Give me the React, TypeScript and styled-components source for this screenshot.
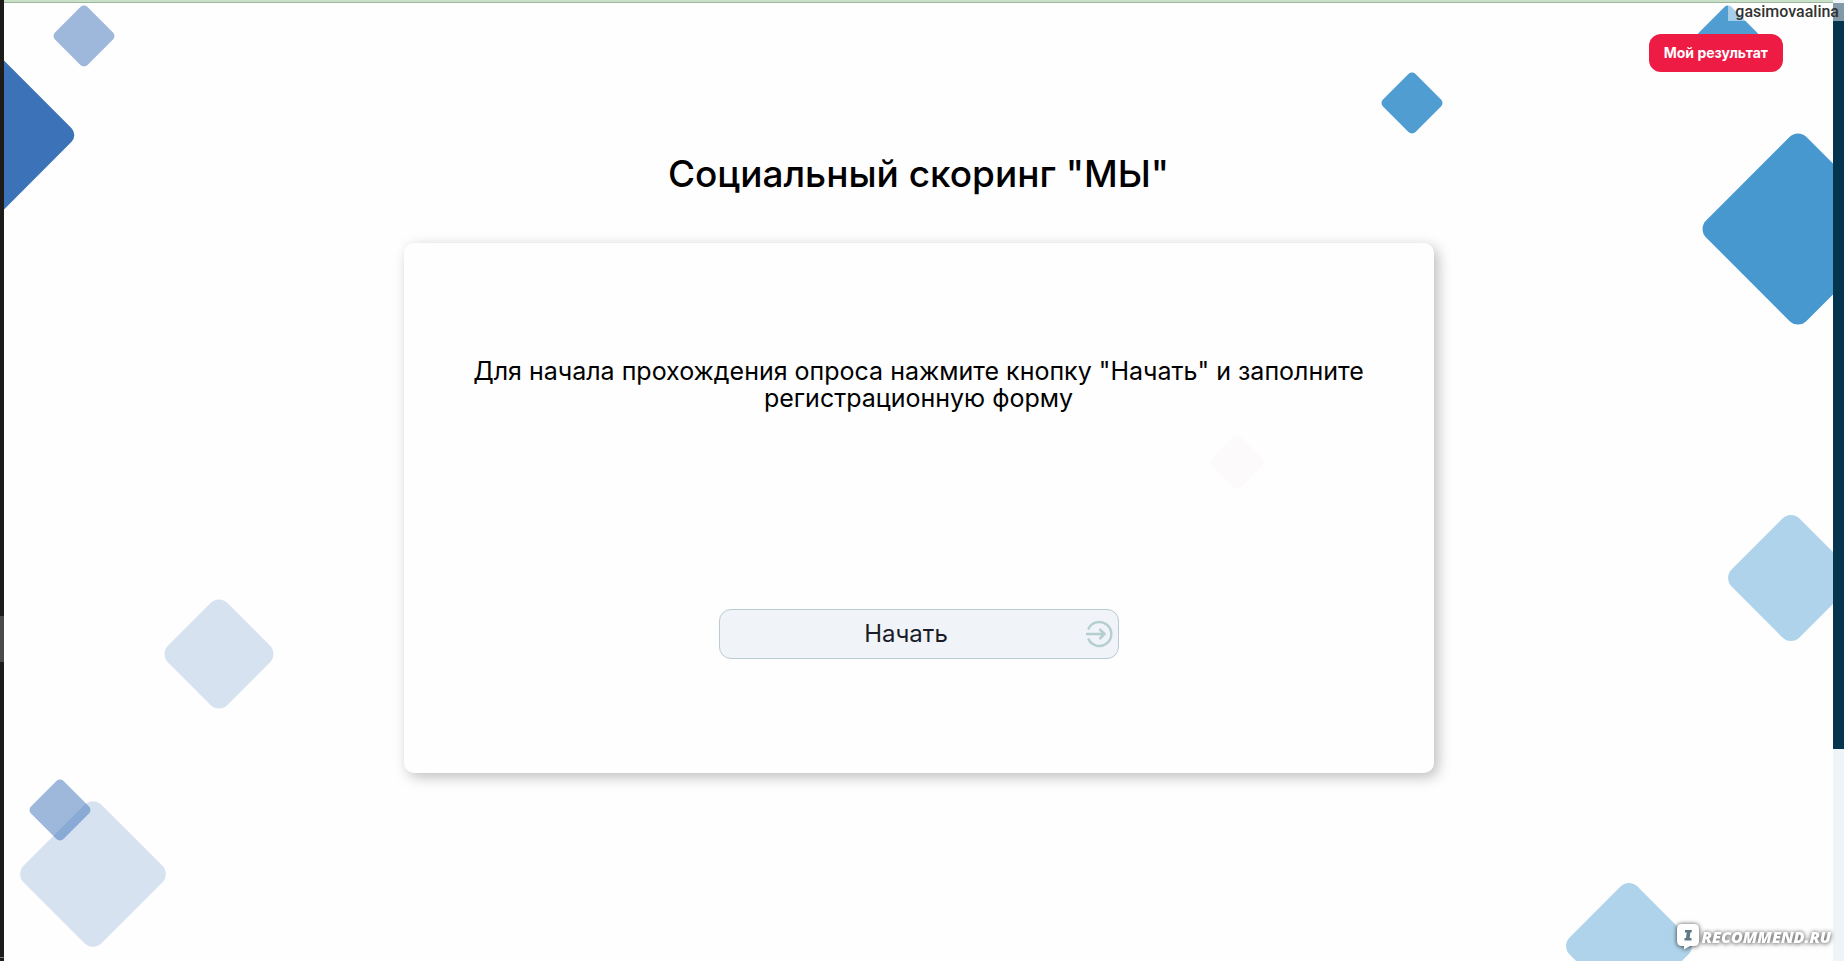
import React from "react";
import styled, { createGlobalStyle } from "styled-components";

const GlobalStyle = createGlobalStyle`
  *, *::before, *::after { box-sizing: border-box; }
  body {
    margin: 0;
    background: #fefefe;
    color: #000;
    font-family: Inter, "Open Sans", "Liberation Sans", sans-serif;
  }
  h1, p { margin: 0; font-weight: inherit; }
  button { font-family: inherit; cursor: pointer; }
`;

const Frame = styled.div`
  position: relative;
  display: grid;
  grid-template-columns: 4px minmax(0, 1fr) 11px;
  min-height: 100vh;
`;

const Edge = styled.div`
  display: flex;
  flex-direction: column;
  padding-bottom: 3px;
  background: #1e1c1a;
`;

const EdgeSpace = styled.div<{ $grow: number }>`
  flex: ${(p) => p.$grow} 1 0;
`;

const EdgeHandle = styled.div`
  height: 46px;
  background: #4b4a48;
`;

const EdgeLine = styled.div`
  height: 1px;
  background: #77756f;
`;

const Page = styled.div`
  position: relative;
  display: flex;
  flex-direction: column;
  overflow: hidden;
  border-top: 2px solid #c8e0c8;
`;

const Decor = styled.div`
  position: absolute;
  inset: 0;
  border-top: 1px solid #9db79d;
`;

type DiamondProps = {
  $size: number;
  $radius: number;
  $color: string;
  $alpha?: number;
  $left?: string;
  $right?: string;
  $top?: string;
  $bottom?: string;
};

const Diamond = styled.span<DiamondProps>`
  position: absolute;
  left: ${(p) => p.$left ?? "auto"};
  right: ${(p) => p.$right ?? "auto"};
  top: ${(p) => p.$top ?? "auto"};
  bottom: ${(p) => p.$bottom ?? "auto"};
  width: ${(p) => p.$size}px;
  height: ${(p) => p.$size}px;
  border-radius: ${(p) => p.$radius}px;
  background: ${(p) => p.$color};
  opacity: ${(p) => p.$alpha ?? 1};
  transform: rotate(45deg);
`;

const Header = styled.header`
  position: relative;
  display: flex;
  justify-content: flex-end;
  padding: 32px 50px 0;
`;

const ResultButton = styled.button`
  height: 38px;
  padding: 0 15px;
  border: 0;
  border-radius: 12px;
  background: #ee1b44;
  color: #fff;
  font-size: 14px;
  font-weight: 700;
  line-height: 20px;
`;

const Main = styled.main`
  position: relative;
  display: flex;
  flex-direction: column;
  align-items: center;
  gap: 47px;
  padding: 80px 24px 48px;
`;

const Title = styled.h1`
  font-size: 37px;
  font-weight: 500;
  line-height: 44px;
  text-align: center;
`;

const Card = styled.section`
  position: relative;
  display: flex;
  flex-direction: column;
  align-items: center;
  justify-content: space-between;
  gap: 48px;
  width: 100%;
  max-width: 1030px;
  min-height: 530px;
  padding: 115px 60px 114px;
  border-radius: 10px;
  background: #fefefe;
  box-shadow: 4px 4px 14px rgba(0, 0, 0, 0.26);
`;

const Intro = styled.p`
  position: relative;
  font-size: 25px;
  line-height: 27px;
  text-align: center;
`;

const StartButton = styled.button`
  display: flex;
  align-items: center;
  width: 100%;
  max-width: 400px;
  height: 50px;
  padding: 0 5px 0 8px;
  border: 1px solid #b9cbd1;
  border-radius: 12px;
  background: #f0f4f8;
  color: #1a1d29;
  font-size: 24px;
  line-height: 28px;
`;

const StartLabel = styled.span`
  flex: 1;
`;

const Scrollbar = styled.div`
  display: flex;
  flex-direction: column;
  padding-top: 3px;
  background: #eef4f8;
`;

const Thumb = styled.div`
  flex: 746 1 0;
  background: #05344f;
`;

const Track = styled.div`
  flex: 212 1 0;
`;

const UserTag = styled.div`
  position: absolute;
  top: 3px;
  right: 0;
  height: 18px;
  padding: 0 5px 0 7px;
  background: rgba(255, 255, 255, 0.5);
  color: #333;
  font: 500 16px/18px Roboto, sans-serif;
`;

const Watermark = styled.div`
  position: absolute;
  right: 13px;
  bottom: 11px;
  display: flex;
  align-items: center;
  gap: 3px;
  color: #fff;
  font: italic 800 16px/24px "Open Sans", sans-serif;
  filter: drop-shadow(0 0 2px rgba(0, 0, 0, 0.5)) drop-shadow(0 1px 2px rgba(0, 0, 0, 0.3));
`;

const BLUE = "#3b72b8";
const SKY = "#4698cf";

const diamonds: DiamondProps[] = [
  { $size: 46, $radius: 5, $color: BLUE, $alpha: 0.5, $left: "57px", $top: "10px" },
  { $size: 142, $radius: 10, $color: BLUE, $left: "-97px", $top: "61px" },
  { $size: 84, $radius: 12, $color: BLUE, $alpha: 0.2, $left: "173px", $top: "609px" },
  { $size: 110, $radius: 12, $color: BLUE, $alpha: 0.2, $left: "34px", $bottom: "32px" },
  { $size: 46, $radius: 5, $color: BLUE, $alpha: 0.5, $left: "33px", $bottom: "128px" },
  { $size: 46, $radius: 5, $color: SKY, $alpha: 0.95, $right: "82px", $top: "10px" },
  { $size: 46, $radius: 5, $color: SKY, $alpha: 0.95, $right: "398px", $top: "77px" },
  { $size: 142, $radius: 12, $color: SKY, $right: "-36px", $top: "155px" },
  { $size: 96, $radius: 12, $color: "#afd3ea", $right: "-6px", $top: "527px" },
  { $size: 96, $radius: 12, $color: "#afd3ea", $right: "156px", $bottom: "-33px" },
];

function EnterIcon() {
  return (
    <svg width="28" height="28" viewBox="0 0 28 28" fill="none" stroke="#b5cfd0" strokeWidth="2.500" aria-hidden="true">
      <path d="M3.200 9.400A12 12 0 1 1 3.200 18.600" />
      <path d="M1 14H19M14.500 9l5 5-5 5" />
    </svg>
  );
}

function SpeechIcon() {
  return (
    <svg width="22" height="26" viewBox="0 0 22 26" aria-hidden="true">
      <path
        fill="#fff"
        d="M5 0H17Q22 0 22 5V17Q22 22 17 22H13L7 25.500V22H5Q0 22 0 17V5Q0 0 5 0Z"
      />
      <path fill="#5f7886" d="M8 6H15L14.500 8.500H13.300L12.700 14H14.500V16.500H7.500V14H9L9.700 8.500H8Z" />
    </svg>
  );
}

export default function App() {
  return (
    <>
      <GlobalStyle />
      <Frame>
        <Edge>
          <EdgeSpace $grow={616} />
          <EdgeHandle />
          <EdgeSpace $grow={295} />
          <EdgeLine />
        </Edge>
        <Page>
          <Decor aria-hidden="true">
            {diamonds.map((d, i) => (
              <Diamond key={i} {...d} />
            ))}
          </Decor>
          <Header>
            <ResultButton type="button">Мой результат</ResultButton>
          </Header>
          <Main>
            <Title>Социальный скоринг "МЫ"</Title>
            <Card>
              <Diamond $size={40} $radius={4} $color="#fdfafb" $right="177px" $top="199px" />
              <Intro>
                Для начала прохождения опроса нажмите кнопку "Начать" и заполните
                регистрационную форму
              </Intro>
              <StartButton type="button">
                <StartLabel>Начать</StartLabel>
                <EnterIcon />
              </StartButton>
            </Card>
          </Main>
        </Page>
        <Scrollbar>
          <Thumb />
          <Track />
        </Scrollbar>
        <UserTag>gasimovaalina</UserTag>
        <Watermark>
          <SpeechIcon />
          <span>RECOMMEND.RU</span>
        </Watermark>
      </Frame>
    </>
  );
}
